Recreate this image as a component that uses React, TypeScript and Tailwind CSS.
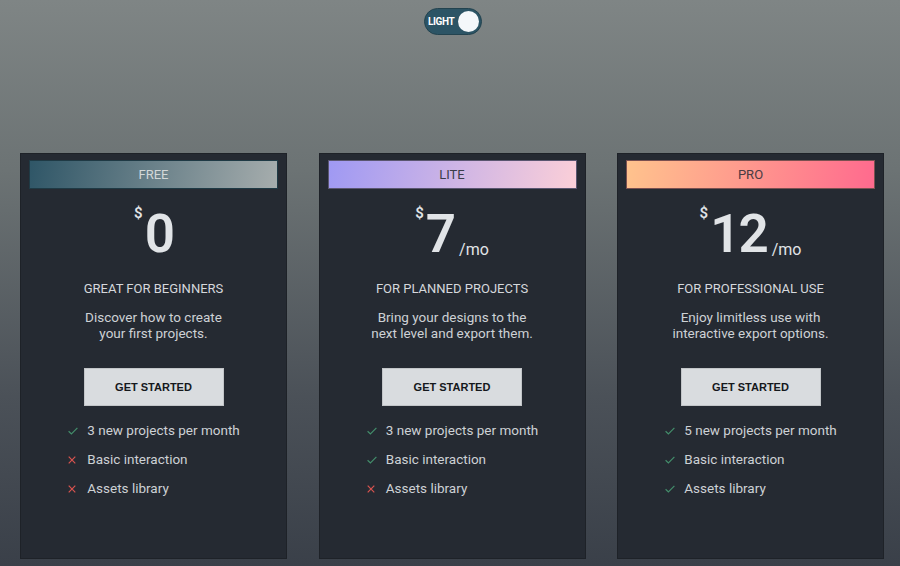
import React from "react";

type Feature = { text: string; ok: boolean };
type Plan = {
  name: string;
  price: string;
  mo: boolean;
  title: string;
  desc: [string, string];
  features: Feature[];
  header: string;
  headerText: string;
};

const plans: Plan[] = [
  {
    name: "FREE",
    price: "0",
    mo: false,
    title: "GREAT FOR BEGINNERS",
    desc: ["Discover how to create", "your first projects."],
    features: [
      { text: "3 new projects per month", ok: true },
      { text: "Basic interaction", ok: false },
      { text: "Assets library", ok: false },
    ],
    header: "bg-[linear-gradient(100deg,#2f5667_0%,#a6adad_100%)] border-[#1f3a45]",
    headerText: "text-[#d3d8d8]",
  },
  {
    name: "LITE",
    price: "7",
    mo: true,
    title: "FOR PLANNED PROJECTS",
    desc: ["Bring your designs to the", "next level and export them."],
    features: [
      { text: "3 new projects per month", ok: true },
      { text: "Basic interaction", ok: true },
      { text: "Assets library", ok: false },
    ],
    header: "bg-[linear-gradient(100deg,#9f99f3_0%,#fbcfd8_100%)] border-[#5a5670]",
    headerText: "text-[#3a3d48]",
  },
  {
    name: "PRO",
    price: "12",
    mo: true,
    title: "FOR PROFESSIONAL USE",
    desc: ["Enjoy limitless use with", "interactive export options."],
    features: [
      { text: "5 new projects per month", ok: true },
      { text: "Basic interaction", ok: true },
      { text: "Assets library", ok: true },
    ],
    header: "bg-[linear-gradient(100deg,#ffc38d_0%,#ff6a8e_100%)] border-[#7a5050]",
    headerText: "text-[#4b3c42]",
  },
];

function Check() {
  return (
    <svg width="10" height="8" viewBox="0 0 10 8" fill="none">
      <path d="M0.6 4.2 L3.4 6.9 L9.4 0.8" stroke="#438d6b" strokeWidth="1.2" />
    </svg>
  );
}

function Cross() {
  return (
    <svg width="8" height="8" viewBox="0 0 8 8" fill="none">
      <path d="M0.7 0.7 L7.3 7.3 M7.3 0.7 L0.7 7.3" stroke="#d9534f" strokeWidth="1.2" />
    </svg>
  );
}

function Card({ p }: { p: Plan }) {
  return (
    <div className="w-[267px] h-[406px] shrink-0 bg-[#252a32] border border-[#1e2228] px-[8px] pt-[6px] flex flex-col items-center">
      <div
        className={`w-full h-[29px] shrink-0 border flex items-center justify-center text-[13px] ${p.header} ${p.headerText}`}
      >
        {p.name}
      </div>
      <div className="mt-[16px] h-[57px] flex items-start text-[#e1e4e7]">
        <span className="text-[15px] font-semibold leading-none mt-[1px] mr-[2px]">$</span>
        <span className="text-[53px] leading-none mt-[3px] font-semibold tracking-[-2px]">{p.price}</span>
        {p.mo && <span className="text-[16px] leading-none self-end mb-[4px] ml-[5px]">/mo</span>}
      </div>
      <div className="mt-[19px] text-[13px] text-[#d5d8dc] leading-[16px]">{p.title}</div>
      <div className="mt-[12px] text-[13.5px] text-[#cdd1d5] leading-[16px] text-center">
        <div>{p.desc[0]}</div>
        <div>{p.desc[1]}</div>
      </div>
      <button
        className="mt-[27px] w-[140px] h-[38px] shrink-0 bg-[#d9dcdf] text-[#15181c] text-[11px] font-bold border border-[#c2c5c8]"
        style={{ fontFamily: '"Liberation Sans", Arial, sans-serif' }}
      >
        GET STARTED
      </button>
      <ul className="mt-[16px] flex flex-col gap-[12px]">
        {p.features.map((f) => (
          <li key={f.text} className="flex items-center h-[17px] text-[13.5px] text-[#cdd1d5]">
            <span className="w-[20px] flex items-center pl-[1px]">{f.ok ? <Check /> : <Cross />}</span>
            {f.text}
          </li>
        ))}
      </ul>
    </div>
  );
}

export default function App() {
  return (
    <div
      className="w-[900px] h-[566px] overflow-hidden bg-[linear-gradient(180deg,#7f8585_0%,#6c7374_30%,#4b5158_70%,#3a4049_100%)] flex flex-col"
      style={{ fontFamily: 'Roboto, "Noto Sans", sans-serif' }}
    >
      <div className="mt-[8px] ml-[424px] w-[58px] h-[27px] rounded-full bg-[#2c5465] border border-[#23434f] flex items-center justify-between pl-[3px] pr-[2px]">
        <span className="text-[10px] font-bold text-white tracking-[-0.4px]">LIGHT</span>
        <span className="w-[21px] h-[21px] rounded-full bg-[#f4f7fa]" />
      </div>
      <div className="mt-[118px] pl-[20px] flex gap-[31.5px]">
        {plans.map((p) => (
          <Card key={p.name} p={p} />
        ))}
      </div>
    </div>
  );
}
